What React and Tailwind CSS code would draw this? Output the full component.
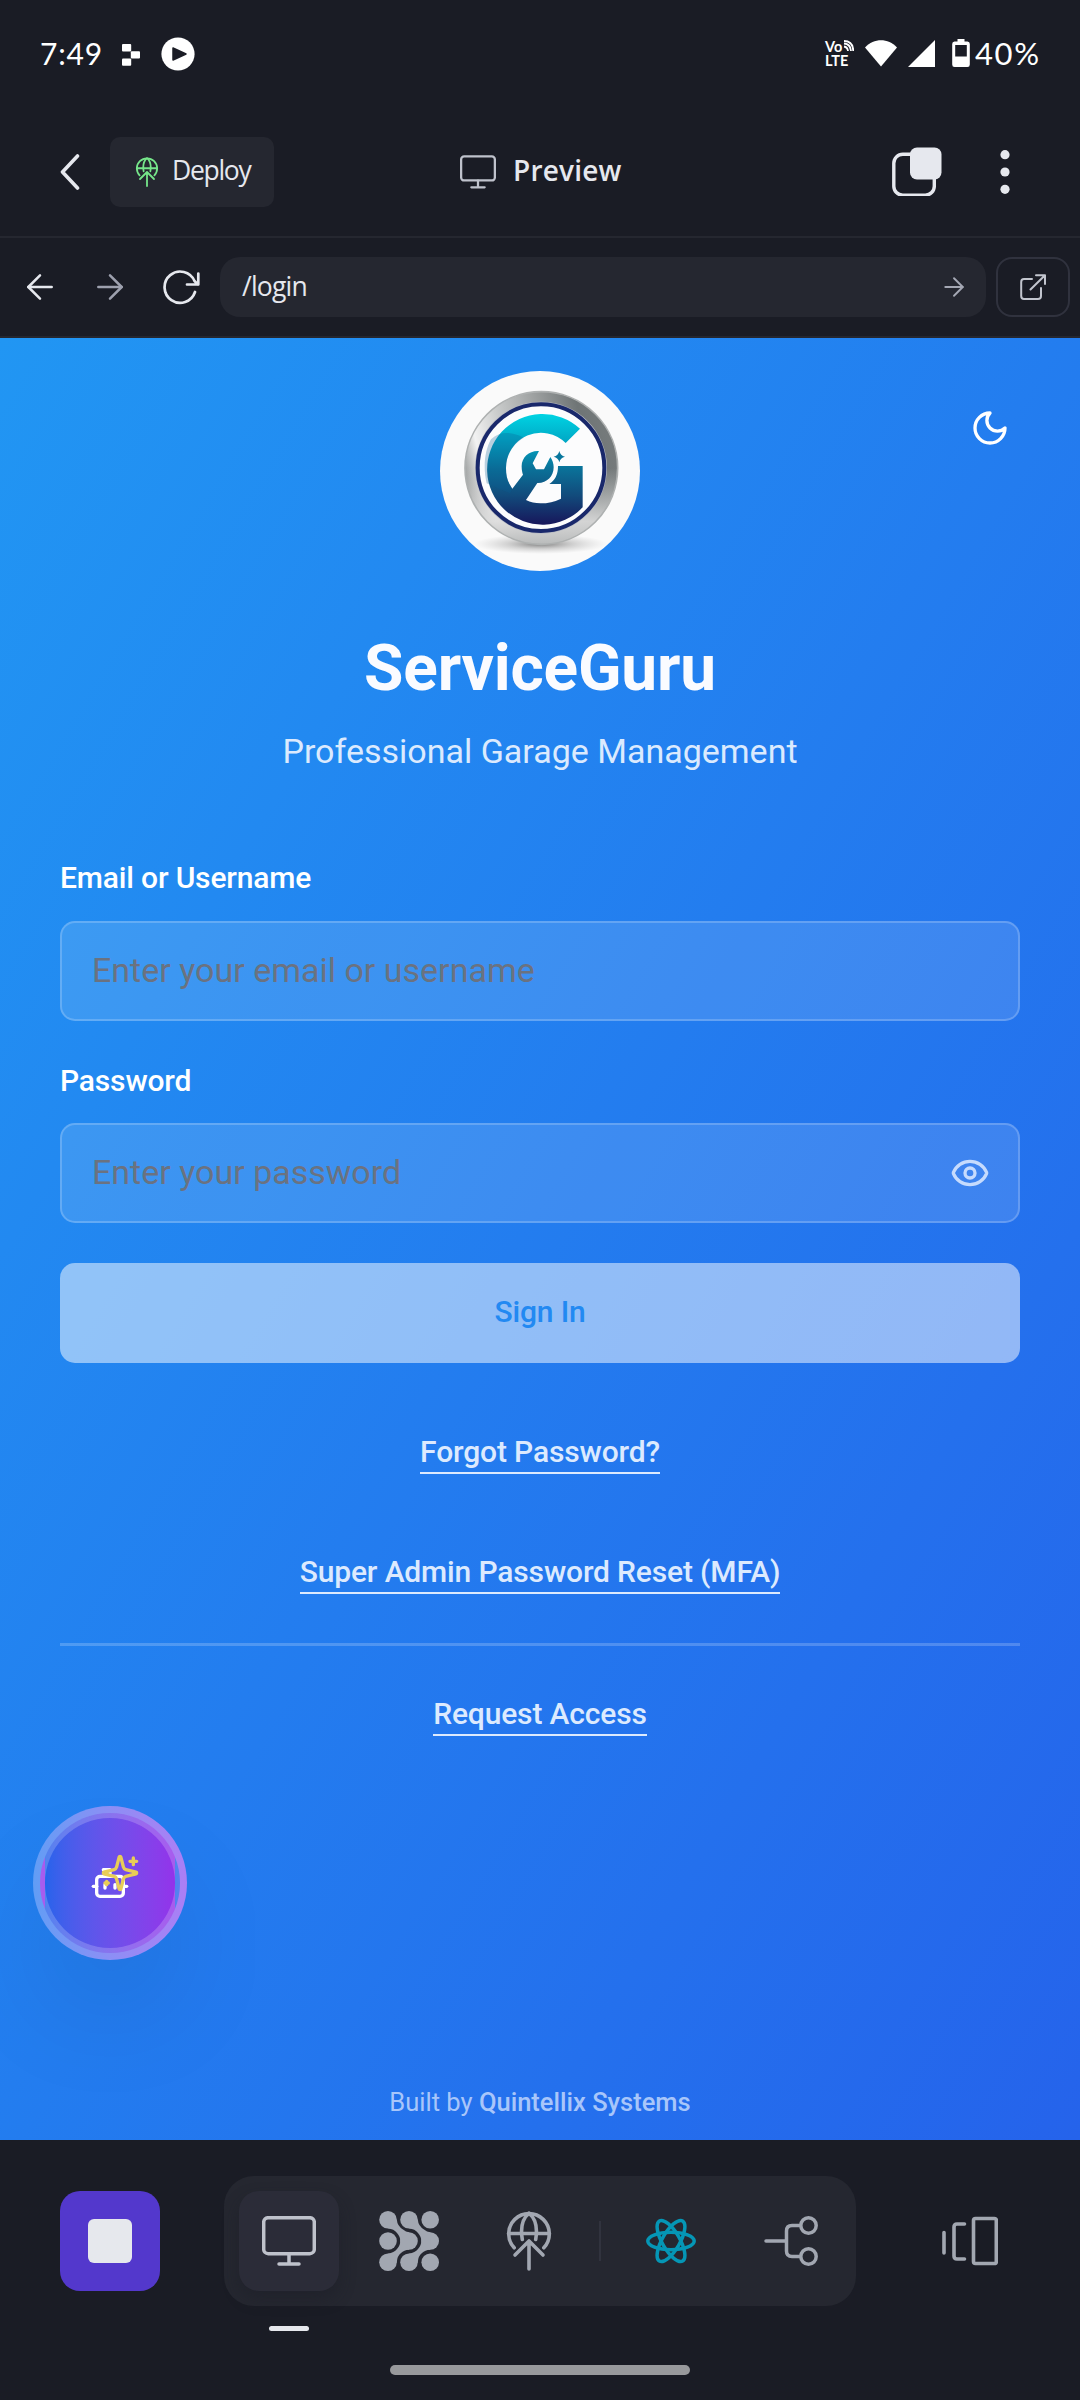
import React from "react";
import { ArrowLeft, ArrowRight, Bot, Eye } from "lucide-react";

const UI_FONT = "font-['Open_Sans',sans-serif]";

function Globe({ className, stroke = 3.6 }) {
  return (
    <svg viewBox="0 0 60 60" className={className} fill="none" stroke="currentColor" strokeWidth={stroke} strokeLinecap="round" strokeLinejoin="round">
      <path d="M15.2 36.8A20.3 20.3 0 1 1 44.8 36.8" />
      <path d="M9.7 22.5H50.3" />
      <path d="M23.3 28.5C21.5 18 23 8 30 2.2C37 8 38.5 18 36.7 28.5" />
      <path d="M30 58V30.5M16 44L30 30L44 44" />
    </svg>
  );
}

function Monitor({ className, stroke }) {
  return (
    <svg viewBox="0 0 54 50" className={className} fill="none" stroke="currentColor" strokeWidth={stroke} strokeLinecap="round" strokeLinejoin="round">
      <rect x="1.7" y="1.7" width="50.6" height="36" rx="4.5" />
      <path d="M27 38V48M17 48H37" />
    </svg>
  );
}

function Logo() {
  return (
    <svg viewBox="60 63 600 600" className="h-[200px] w-[200px]">
      <defs>
        <linearGradient id="ring" x1="0" y1="0.55" x2="1" y2="0.3">
          <stop offset="0" stopColor="#9a9d9d" />
          <stop offset="0.12" stopColor="#f2f2f2" />
          <stop offset="0.3" stopColor="#c9cbcb" />
          <stop offset="0.55" stopColor="#9da0a0" />
          <stop offset="0.8" stopColor="#6f7576" />
          <stop offset="1" stopColor="#777c7d" />
        </linearGradient>
        <linearGradient id="ringLow" x1="0" y1="0" x2="0" y2="1">
          <stop offset="0.5" stopColor="#d8d8d8" stopOpacity="0" />
          <stop offset="0.85" stopColor="#dcdcdc" stopOpacity="0.9" />
          <stop offset="1" stopColor="#b9bbbb" />
        </linearGradient>
        <linearGradient id="gee" x1="0" y1="189" x2="0" y2="521" gradientUnits="userSpaceOnUse">
          <stop offset="0" stopColor="#00d5e4" />
          <stop offset="0.25" stopColor="#01a9c6" />
          <stop offset="0.5" stopColor="#0a7299" />
          <stop offset="0.75" stopColor="#124a7b" />
          <stop offset="1" stopColor="#17185c" />
        </linearGradient>
        <radialGradient id="floor">
          <stop offset="0" stopColor="#555" stopOpacity="0.75" />
          <stop offset="0.5" stopColor="#888" stopOpacity="0.35" />
          <stop offset="1" stopColor="#aaa" stopOpacity="0" />
        </radialGradient>
      </defs>
      <circle cx="360" cy="363" r="300" fill="#fafafa" />
      <ellipse cx="362" cy="582" rx="200" ry="30" fill="url(#floor)" />
      <circle cx="364" cy="354" r="229" fill="url(#ring)" />
      <circle cx="364" cy="354" r="229" fill="url(#ringLow)" />
      <circle cx="364" cy="354" r="229" fill="none" stroke="#aeb1b1" strokeWidth="5" />
      <circle cx="363" cy="353" r="198" fill="#b9bcc4" />
      <circle cx="363" cy="353" r="190" fill="#fcfcfd" stroke="#19286b" strokeWidth="12" />
      <path
        d="M480 236A166 166 0 1 0 488 472V348H414C414 375 405 390 388 402H423V446Q395 460 361 460Q338 460 318 450L352 399C380 400 401 380 401 352C401 340 397 330 391 321L372 358H348L338 340L357 303C328 301 304 322 305 350C305 360 307 368 309 374L277 416C262 395 258 378 258 355A105 105 0 0 1 437 279Z"
        fill="url(#gee)"
      />
      <path d="M213 268C240 242 275 245 312 263C280 280 258 315 258 355C258 378 262 395 277 416L270 430L200 400C188 350 195 300 213 268Z" fill="#0b5f93" opacity="0.28" />
      <path d="M418 303Q421 317 435 320Q421 323 418 337Q415 323 401 320Q415 317 418 303Z" fill="#08779d" />
    </svg>
  );
}

function StatusBar() {
  return (
    <div className="flex h-[108px] items-center pl-10 pr-[38px] text-white font-['Lato',sans-serif] text-[30px] leading-none">
      <span className="mb-[2px] w-[82px] tracking-[0.8px]">7:49</span>
      <svg viewBox="0 0 18 22" className="mt-px h-[22px] w-[18px]" fill="currentColor">
        <rect x="0" y="0" width="9.2" height="7.4" rx="1" />
        <rect x="8.8" y="7.2" width="9.2" height="7.4" rx="1" />
        <rect x="0" y="14.4" width="9.2" height="7.4" rx="1" />
      </svg>
      <svg viewBox="0 0 34 34" className="ml-[21px] h-[34px] w-[34px]">
        <circle cx="17" cy="17" r="16.6" fill="#fff" />
        <path d="M12 11L25 17L12 23Z" fill="#1a1c25" stroke="#1a1c25" strokeWidth="1.5" strokeLinejoin="round" />
      </svg>
      <div className="ml-auto flex w-[30px] flex-col text-[14.5px] font-bold leading-[14px]">
        <div className="flex">
          <span>Vo</span>
          <svg viewBox="0 0 12 12" className="h-3 w-3" fill="none" stroke="currentColor" strokeWidth="1.8">
            <path d="M2 6.5Q5.5 7 6 11M2 3.5Q8.5 4 9 11M2 1Q11 1 11.3 11" />
          </svg>
        </div>
        <span>LTE</span>
      </div>
      <svg viewBox="0 0 32 27" className="mb-[2px] ml-[10px] h-[27px] w-8" fill="currentColor">
        <path d="M0 7.5C9-2.2 23-2.2 32 7.5L16 26.5Z" />
      </svg>
      <svg viewBox="0 0 27 27" className="mb-px ml-[11px] h-[27px] w-[27px]" fill="currentColor">
        <path d="M27 0V27H0Z" />
      </svg>
      <svg viewBox="0 0 18 28" className="mb-[2px] ml-[17px] h-7 w-[18px]">
        <path d="M5.5 0H12.5V2.5H15.5Q17.8 2.5 17.8 5V25.5Q17.8 28 15.5 28H2.5Q0.2 28 0.2 25.5V5Q0.2 2.5 2.5 2.5H5.5Z" fill="#fff" />
        <rect x="3.2" y="6" width="11.6" height="11.5" fill="#1a1c25" />
      </svg>
      <span className="mb-[2px] ml-[5px] w-[67px] text-[31px] tracking-[1.6px]">40%</span>
    </div>
  );
}

function Header() {
  return (
    <div className={`flex h-[130px] items-center border-b-2 border-[#252730] text-[#e6e8ee] ${UI_FONT}`}>
      <svg viewBox="0 0 20 36" className="ml-[60px] h-9 w-5" fill="none" stroke="currentColor" strokeWidth="3.6" strokeLinecap="round" strokeLinejoin="round">
        <path d="M17.5 2L2.5 18L17.5 34" />
      </svg>
      <button className="ml-[30px] flex h-[70px] w-[164px] items-center rounded-[10px] bg-[#252730]">
        <Globe className="ml-[22px] h-[30px] w-[30px] text-[#76e68a]" />
        <span className="mb-[3px] ml-[10px] text-[26.5px] leading-none tracking-[-1.3px]">Deploy</span>
      </button>
      <div className="ml-[186px] flex items-center">
        <Monitor className="h-[34px] w-9 text-[#bfc2cc]" stroke="3.4" />
        <span className="mb-[5px] ml-[17px] text-[28px] font-semibold leading-none tracking-[0.2px]">Preview</span>
      </div>
      <svg viewBox="0 0 50 50" className="mb-[2px] ml-auto h-[50px] w-[50px]">
        <rect x="1.8" y="8.2" width="40.5" height="41" rx="9" fill="none" stroke="currentColor" strokeWidth="3.4" />
        <rect x="18" y="1.5" width="31.5" height="32" rx="7" fill="currentColor" />
      </svg>
      <svg viewBox="0 0 10 44" className="ml-[58px] mr-[70px] h-11 w-[10px]" fill="currentColor">
        <circle cx="5" cy="4.7" r="4.6" />
        <circle cx="5" cy="22" r="4.6" />
        <circle cx="5" cy="39.3" r="4.6" />
      </svg>
    </div>
  );
}

function AddressBar() {
  return (
    <div className={`flex h-[100px] items-start border-b-2 border-[#252730] pt-[19px] text-[#e6e8ee] ${UI_FONT}`}>
      <div className="flex h-[60px] items-center">
        <ArrowLeft className="ml-[20px] h-10 w-10" strokeWidth={1.5} />
        <ArrowRight className="ml-[30px] h-10 w-10 text-[#9da0ae]" strokeWidth={1.5} />
        <svg viewBox="0 0 38 36" className="ml-[32px] h-9 w-[38px]" fill="none" stroke="currentColor" strokeWidth="2.7" strokeLinecap="round" strokeLinejoin="round">
          <path d="M33 23A15.6 15.6 0 1 1 32.5 12L36 15.5M36.3 4.5V15.5H25" />
        </svg>
      </div>
      <div className="ml-[20px] flex h-[60px] w-[766px] items-center rounded-[20px] bg-[#252730]">
        <span className="mb-[2px] ml-[22px] text-[26.5px] leading-none tracking-[-0.8px]">/login</span>
        <ArrowRight className="ml-auto mr-[17px] h-[30px] w-[30px] text-[#a5a8b4]" strokeWidth={1.5} />
      </div>
      <div className="ml-[10px] flex h-[60px] w-[74px] items-center justify-center rounded-[16px] border-2 border-[#30323e]">
        <svg viewBox="0 0 26 26" className="h-[26px] w-[26px] text-[#c2c5ce]" fill="none" stroke="currentColor" strokeWidth="2" strokeLinecap="round" strokeLinejoin="round">
          <path d="M12 5H4Q1.2 5 1.2 8V22Q1.2 25 4 25H18Q21 25 21 22V14M16 1.2H25V10M25 1.2L10.5 15.5" />
        </svg>
      </div>
    </div>
  );
}

function TextLink({ className, children }) {
  return (
    <a className={`h-[44px] border-b-2 border-[#dceafe] pt-[2px] text-[30px] font-medium leading-[40px] tracking-[-0.15px] text-[#dceafe] ${className}`}>
      {children}
    </a>
  );
}

function Field({ label, placeholder, labelClass, inputClass, children }) {
  return (
    <>
      <label className={`block h-10 text-[30px] font-medium leading-10 tracking-[-0.16px] text-white ${labelClass}`}>{label}</label>
      <div className={`flex h-[100px] items-center justify-between rounded-[15px] border-2 border-white/20 bg-white/[0.12] bg-clip-border pl-[30px] pr-[28px] text-[34px] leading-none text-[#6b7280] ${inputClass}`}>
        <span className="mb-[2px]">{placeholder}</span>
        {children}
      </div>
    </>
  );
}

function AssistantButton() {
  return (
    <div className="absolute left-[33px] top-[1468px] flex h-[154px] w-[154px] items-center justify-center rounded-full bg-gradient-to-r from-[#619df5] to-[#ab7ef5] shadow-[0_62px_125px_-30px_rgba(0,0,0,0.18)]">
      <div className="relative flex h-[140px] w-[140px] items-center justify-center rounded-full border-[5px] border-white/20 bg-gradient-to-r from-[#2563eb] to-[#9333ea]">
        <Bot className="h-10 w-10 text-white" strokeWidth={2} />
        <svg viewBox="0 0 24 24" className="absolute left-[55px] top-[35px] h-10 w-10 text-[#e9cd57]" fill="none" stroke="currentColor" strokeWidth="2" strokeLinecap="round" strokeLinejoin="round">
          <path d="M9.937 15.5A2 2 0 0 0 8.5 14.063l-6.135-1.582a.5.5 0 0 1 0-.962L8.5 9.936A2 2 0 0 0 9.937 8.5l1.582-6.135a.5.5 0 0 1 .963 0L14.063 8.5A2 2 0 0 0 15.5 9.937l6.135 1.581a.5.5 0 0 1 0 .964L15.5 14.063a2 2 0 0 0-1.437 1.437l-1.582 6.135a.5.5 0 0 1-.963 0z" />
          <path d="M20 3v4M22 5h-4M4 17v2M5 18H3" />
        </svg>
      </div>
    </div>
  );
}

function LoginPage() {
  return (
    <main className="relative flex h-[1802px] flex-col overflow-hidden bg-[linear-gradient(to_bottom_right,#2196f3_0%,#2563eb_100%)] px-[60px] pt-[33px] font-['Roboto',sans-serif]">
      <svg viewBox="0 0 24 24" className="absolute right-[70px] top-[70px] h-10 w-10 text-white" fill="none" stroke="currentColor" strokeWidth="2" strokeLinecap="round" strokeLinejoin="round">
        <path d="M12 3a6 6 0 0 0 9 9 9 9 0 1 1-9-9Z" />
      </svg>
      <div className="flex justify-center">
        <Logo />
      </div>
      <h1 className="mt-[58px] h-20 text-center text-[64px] font-bold leading-[80px] tracking-[-0.2px] text-[#fafbff]">ServiceGuru</h1>
      <p className="mt-[17px] h-[50px] text-center text-[34px] leading-[50px] text-[#dbeafe]">Professional Garage Management</p>
      <Field label="Email or Username" placeholder="Enter your email or username" labelClass="mt-[82px]" inputClass="mt-[23px]" />
      <Field label="Password" placeholder="Enter your password" labelClass="mt-[40px]" inputClass="mt-[22px]">
        <Eye className="h-10 w-10 text-[#c6dbfd]" strokeWidth={2} />
      </Field>
      <button className="mt-[40px] h-[100px] shrink-0 rounded-[15px] bg-white/50 pb-[2px] text-[30px] font-medium leading-none tracking-[-0.16px] text-[#2289f2]">Sign In</button>
      <div className="flex flex-col items-center">
        <TextLink className="mt-[67px]">Forgot Password?</TextLink>
        <TextLink className="mt-[76px]">Super Admin Password Reset (MFA)</TextLink>
        <div className="mt-[49px] h-[3px] w-full bg-white/20" />
        <TextLink className="mt-[46px]">Request Access</TextLink>
      </div>
      <p className="mb-[18px] mt-auto h-10 text-center text-[25.5px] leading-10 text-[#a8c6fa]">
        Built by <span className="font-medium">Quintellix Systems</span>
      </p>
      <AssistantButton />
    </main>
  );
}

function MeshIcon() {
  return (
    <svg viewBox="0 0 60 60" className="h-[60px] w-[60px]" fill="currentColor">
      <g>
        <circle cx="9" cy="8.8" r="8.8" />
        <circle cx="30" cy="8.8" r="8.8" />
        <circle cx="51.2" cy="8.8" r="8.8" />
        <circle cx="9" cy="30" r="8.8" />
        <circle cx="30" cy="30" r="8.8" />
        <circle cx="51.2" cy="30" r="8.8" />
        <circle cx="9" cy="51.2" r="8.8" />
        <circle cx="30" cy="51.2" r="8.8" />
        <circle cx="51.2" cy="51.2" r="8.8" />
      </g>
      <path d="M17.8 8.5Q18.3 15 24 18.5Q27 21 30 21.2V38.8Q25 39 22 42Q18 45 17.8 51.5L9 42.4Q15 42 18 38Q21.5 34 21.2 30Q21.5 26 18 22Q15 18 9 17.6Z" />
      <path d="M38.8 8.5Q39.3 15 45 18.5Q48 21 51.2 21.2V38.8Q46 39 43 42Q39 45 38.8 51.5L30 42.4Q36 42 39 38Q42.5 34 42.2 30Q42.5 26 39 22Q36 18 30 17.6Z" />
    </svg>
  );
}

function BottomBar() {
  return (
    <div className="flex h-[260px] flex-col text-[#a2a7b1]">
      <div className="mt-[36px] flex h-[130px] items-center">
        <div className="ml-[60px] flex h-[100px] w-[100px] items-center justify-center rounded-[20px] bg-[#5338cc]">
          <div className="h-11 w-11 rounded-[6px] bg-[#e6e8ed]" />
        </div>
        <div className="ml-[64px] flex h-[130px] w-[632px] items-center rounded-[30px] bg-[#252730]">
          <div className="ml-[15px] flex h-[100px] w-[100px] items-center justify-center rounded-[20px] bg-[#2b2c38] text-[#bfc2cb] shadow-[0_8px_16px_rgba(26,28,37,0.45)]">
            <Monitor className="h-[50px] w-[54px]" stroke="3.5" />
          </div>
          <div className="ml-[40px]">
            <MeshIcon />
          </div>
          <Globe className="ml-[60px] h-[60px] w-[60px]" />
          <div className="ml-[40px] h-10 w-[2px] bg-[#31333e]" />
          <svg viewBox="-25 -23 50 46" className="ml-[45px] h-[46px] w-[50px] text-[#0596b5]" fill="none" stroke="currentColor" strokeWidth="3.5">
            <ellipse rx="23.2" ry="8.8" />
            <ellipse rx="23.2" ry="8.8" transform="rotate(60)" />
            <ellipse rx="23.2" ry="8.8" transform="rotate(120)" />
          </svg>
          <svg viewBox="0 0 54 50" className="ml-[68px] h-[50px] w-[54px]" fill="none" stroke="currentColor" strokeWidth="3.5" strokeLinecap="round">
            <circle cx="44.5" cy="9.5" r="7.7" />
            <circle cx="44.5" cy="40.5" r="7.7" />
            <path d="M2 25H22M36 9.5H28Q22.5 9.5 22.5 15V35Q22.5 40.5 28 40.5H36" />
          </svg>
        </div>
        <svg viewBox="0 0 56 50" className="ml-[86px] h-[50px] w-[56px]" fill="none" stroke="currentColor" strokeWidth="3.6" strokeLinecap="round" strokeLinejoin="round">
          <rect x="31.5" y="2.5" width="22.8" height="45" rx="2" />
          <path d="M2 16.5V37M22.5 8H15Q12 8 12 11V40Q12 43 15 43H22.5" />
        </svg>
      </div>
      <div className="ml-[269px] mt-[20px] h-[5px] w-10 rounded-full bg-[#e6e8ed]" />
      <div className="mt-[34px] h-[10px] w-[300px] self-center rounded-full bg-[#98999c]" />
    </div>
  );
}

export default function App() {
  return (
    <div className="h-[2400px] w-[1080px] overflow-hidden bg-[#1a1c25]">
      <StatusBar />
      <Header />
      <AddressBar />
      <LoginPage />
      <BottomBar />
    </div>
  );
}
